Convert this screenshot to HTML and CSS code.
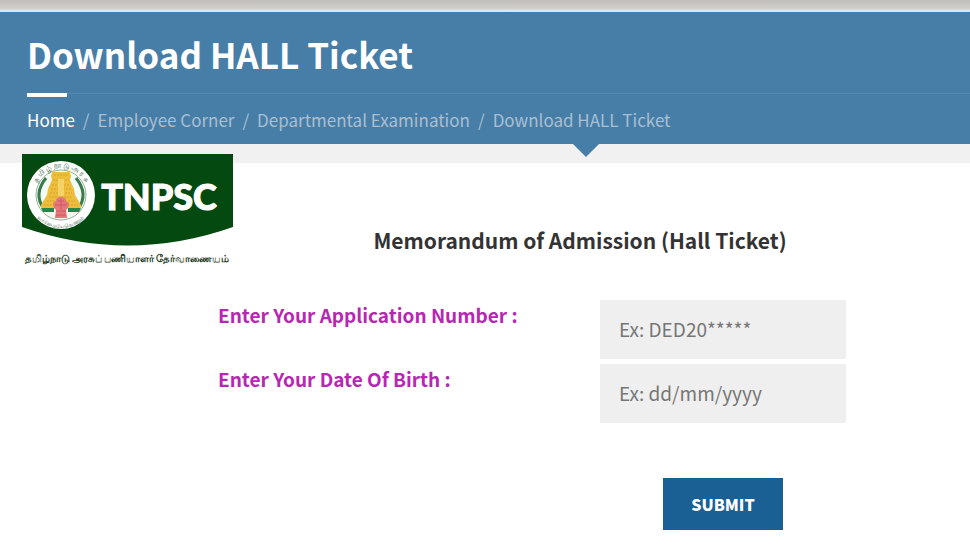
FILE: index.html
```html
<!DOCTYPE html>
<html lang="en">
  <head>
    <meta charset="UTF-8" />
    <meta name="viewport" content="width=device-width, initial-scale=1.0" />
    <title>Download HALL Ticket</title>
    <link rel="stylesheet" href="styles.css">
  </head>
  <body>
    <div class="top-strip"></div>
    <header class="page-header">
      <h1>Download HALL Ticket</h1>
      <div class="divider"></div>
      <nav>
        <ol class="breadcrumb">
          <li><a href="#" class="home">Home</a></li>
          <li><a href="#">Employee Corner</a></li>
          <li><a href="#">Departmental Examination</a></li>
          <li>Download HALL Ticket</li>
        </ol>
      </nav>
      <span class="header-arrow"></span>
    </header>

    <main>
      <div class="intro">
        <svg class="logo" viewBox="0 0 211 112" role="img" aria-label="TNPSC">
          <path d="M0 0H211V73Q106 110 0 73Z" fill="#044a10" />
          <circle cx="39" cy="41" r="34" fill="#fff" />
          <circle cx="39" cy="41" r="25" fill="#f4faf4" stroke="#8fb59a" stroke-width="1" />
          <!-- wreath -->
          <path d="M24 24Q11 40 22 55M54 24Q67 40 56 55" fill="none" stroke="#3b7a4c" stroke-width="3" />
          <path d="M18 54H60Q55 61 46 64H32Q23 61 18 54Z" fill="#f7f7ef" />
          <path d="M19 54H32V58H21ZM46 54H59L57 58H46Z" fill="#26864a" />
          <!-- gopuram -->
          <path d="M31 16L33 18H45L47 16L49 22L48 26L52 35L53 41L59 51V54H19V51L25 41L26 35L30 26L29 22Z" fill="#edbd3c" />
          <path d="M32 21H46M31 26H47M30 31H48M29 35H49M28 39H50M27 43H51M25 47H53M22 51H56" fill="none" stroke="#d9a32e" stroke-width="1" stroke-dasharray="2 1" />
          <path d="M36 25H42V42H36Z" fill="#f5d267" />
          <!-- lion capital -->
          <path d="M34 47Q34 43 39 43Q44 43 44 47L47 49L46 54L44 56L45 64H33L34 56L32 54L31 49Z" fill="#e27878" />
          <path d="M36 47H42M33 51H45M34 57H44M34 61H44M39 45V55" fill="none" stroke="#d0566a" stroke-width="1" />
          <path id="arc-top" d="M14 51A27 27 0 1 1 64 51" fill="none" />
          <path id="arc-bottom" d="M8 50A32 32 0 0 0 70 50" fill="none" />
          <text class="seal-text">
            <textPath href="#arc-top" startOffset="50%">த மி ழ் நா டு அ ர சு</textPath>
          </text>
          <text class="seal-motto">
            <textPath href="#arc-bottom" startOffset="50%">வாய்மையே வெல்லும்</textPath>
          </text>
          <text class="logo-name" x="137" y="56">TNPSC</text>
          <text class="logo-caption" x="105" y="108">தமிழ்நாடு அரசுப் பணியாளர் தேர்வாணையம்</text>
        </svg>
        <h2>Memorandum of Admission (Hall Ticket)</h2>
      </div>

      <form class="ticket-form">
        <label for="application-number">Enter Your Application Number :</label>
        <input type="text" id="application-number" placeholder="Ex: DED20*****" />
        <label for="dob">Enter Your Date Of Birth :</label>
        <input type="text" id="dob" placeholder="Ex: dd/mm/yyyy" />
        <button type="submit" class="submit-button">SUBMIT</button>
      </form>
    </main>
  </body>
</html>
```

FILE: styles.css
```css
* {
  box-sizing: border-box;
}

body {
  margin: 0;
  background-color: #fff;
  font-family: "Noto Sans CJK SC", "Noto Sans", sans-serif;
  color: #333;
}

.top-strip {
  height: 12px;
  background: linear-gradient(#c0bdbb, #d2d1cc 9px, #dbe5ee 10px);
}

.page-header {
  position: relative;
  height: 132px;
  padding: 18px 0 0 27px;
  background-color: #477ea7;
}

.page-header h1 {
  margin: 0;
  font-size: 35px;
  font-weight: 700;
  line-height: 48px;
  color: #fff;
}

.divider {
  height: 4px;
  margin-top: 15px;
  border-top: 1px solid #5589b0;
}

.divider::before {
  content: "";
  display: block;
  width: 40px;
  height: 4px;
  margin-top: -1px;
  background-color: #fff;
}

.breadcrumb {
  display: flex;
  margin: 12px 0 0;
  padding: 0;
  list-style: none;
  font-size: 17px;
  line-height: 22px;
  color: #a9bfd2;
}

.breadcrumb li + li::before {
  content: "/";
  padding: 0 8px;
}

.breadcrumb a {
  color: inherit;
  text-decoration: none;
}

.breadcrumb .home {
  color: #fff;
}

.header-arrow {
  position: absolute;
  top: 100%;
  left: 573px;
  border: 13px solid transparent;
  border-top-color: #477ea7;
  border-bottom: 0;
}

main {
  padding-top: 10px;
  background: linear-gradient(#f1f1f2 19px, #fff 19px);
}

.intro {
  display: flex;
  align-items: flex-end;
  padding: 0 43px 0 22px;
}

.logo {
  flex: none;
  width: 211px;
}

.logo text {
  text-anchor: middle;
}

.logo-name {
  font-family: Lato, sans-serif;
  font-size: 36px;
  font-weight: 900;
  fill: #fff;
  stroke: #fff;
  stroke-width: 1px;
}

.logo-caption {
  font-size: 10px;
  font-weight: 700;
  fill: #1d3a22;
}

.seal-text {
  font-size: 7px;
  fill: #355c40;
}

.seal-motto {
  font-size: 5px;
  fill: #355c40;
}

.intro h2 {
  flex: 1;
  margin: 0 0 11px;
  font-size: 21px;
  font-weight: 700;
  line-height: 30px;
  text-align: center;
}

.ticket-form {
  display: grid;
  grid-template-columns: 382px 246px;
  row-gap: 5px;
  padding: 34px 0 15px 218px;
}

.ticket-form label {
  font-size: 19px;
  font-weight: 700;
  line-height: 30px;
  color: #b727b3;
}

.ticket-form input {
  width: 100%;
  height: 59px;
  padding: 0 20px 2px 19px;
  border: none;
  background-color: #efefef;
  font-family: inherit;
  font-size: 19px;
}

.ticket-form input::placeholder {
  color: #777;
}

.submit-button {
  grid-column: 2;
  justify-self: center;
  height: 52px;
  margin-top: 50px;
  padding: 0 28px;
  border: none;
  background-color: #1a6095;
  font-family: inherit;
  font-size: 16px;
  font-weight: 900;
  color: #fff;
  cursor: pointer;
}
```
